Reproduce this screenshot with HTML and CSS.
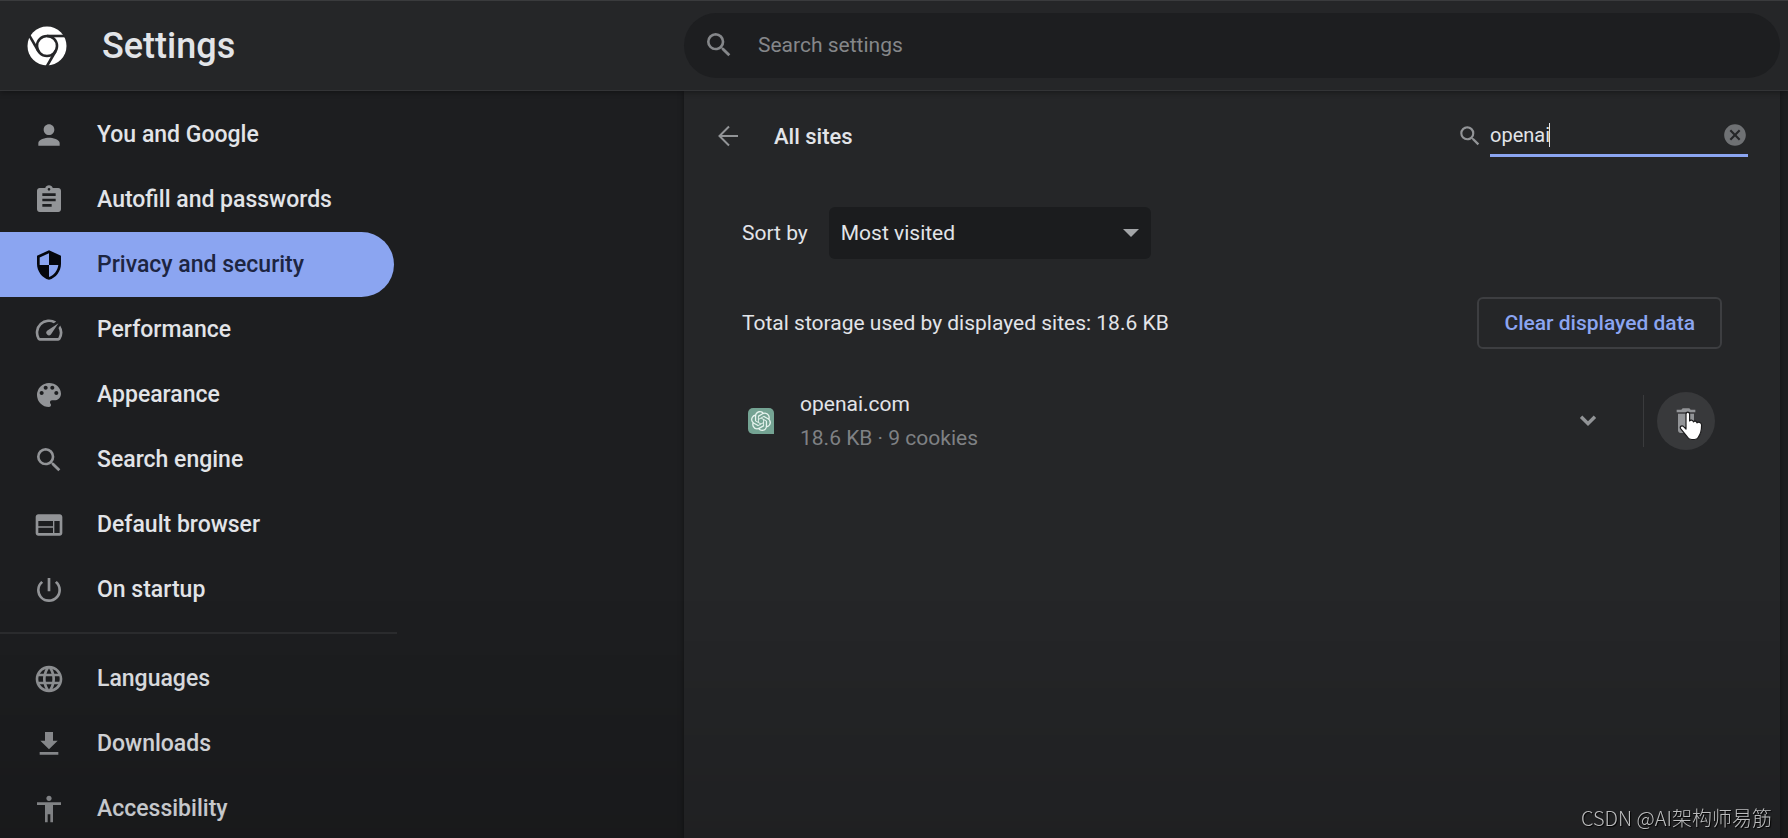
FILE: index.html
```html
<!DOCTYPE html>
<html lang="en">
<head>
<meta charset="utf-8">
<meta name="viewport" content="width=device-width, initial-scale=1">
<title>Settings - All sites</title>
<link rel="stylesheet" href="styles.css">
</head>
<body>
<header class="topbar">
  <div class="brand">
    <svg class="brand-logo" viewBox="0 0 40 40" aria-hidden="true">
      <circle cx="20" cy="20" r="19.5" fill="#fff"/>
      <g fill="none" stroke="#252628" stroke-width="2.6">
        <circle cx="20" cy="20" r="10"/>
        <path d="M20 10H39"/>
        <path d="M20 10H39" transform="rotate(120 20 20)"/>
        <path d="M20 10H39" transform="rotate(240 20 20)"/>
      </g>
    </svg>
    <h1 class="brand-title">Settings</h1>
  </div>
  <label class="search">
    <svg class="icon search-icon" viewBox="0 0 24 24" aria-hidden="true"><path d="M15.5 14h-.79l-.28-.27A6.471 6.471 0 0 0 16 9.5 6.5 6.5 0 1 0 9.5 16c1.61 0 3.09-.59 4.23-1.57l.27.28v.79l5 4.99L20.49 19l-4.99-5zm-6 0C7.01 14 5 11.99 5 9.5S7.01 5 9.5 5 14 7.01 14 9.5 11.99 14 9.5 14z"/></svg>
    <input class="search-input" type="text" placeholder="Search settings" aria-label="Search settings">
  </label>
</header>

<div class="layout">
  <nav class="sidebar" aria-label="Settings sections">
    <div class="nav-group">
      <a class="nav-item" href="#people"><svg class="icon" viewBox="0 0 24 24" aria-hidden="true"><path d="M12 12c2.21 0 4-1.79 4-4s-1.79-4-4-4-4 1.79-4 4 1.79 4 4 4zm0 2c-2.67 0-8 1.34-8 4v2h16v-2c0-2.66-5.33-4-8-4z"/></svg>You and Google</a>
      <a class="nav-item" href="#autofill"><svg class="icon" viewBox="0 0 24 24" aria-hidden="true"><path d="M19 3h-4.18C14.4 1.84 13.3 1 12 1c-1.300 0-2.400.84-2.820 2H5c-1.100 0-2 .9-2 2v14c0 1.100.9 2 2 2h14c1.100 0 2-.9 2-2V5c0-1.100-.9-2-2-2zm-7 0c.55 0 1 .45 1 1s-.45 1-1 1-1-.45-1-1 .45-1 1-1zm2 14H7v-2h7v2zm3-4H7v-2h10v2zm0-4H7V7h10v2z"/></svg>Autofill and passwords</a>
      <a class="nav-item nav-item-active" href="#privacy" aria-current="page"><svg class="icon" viewBox="0 0 24 24" aria-hidden="true"><path d="M12 1 3 5v6c0 5.550 3.840 10.740 9 12 5.160-1.260 9-6.450 9-12V5l-9-4zm0 10.990h7c-.53 4.120-3.280 7.790-7 8.940V12H5V6.300l7-3.110v8.800z"/></svg>Privacy and security</a>
      <a class="nav-item" href="#performance"><svg class="icon" viewBox="0 0 24 24" aria-hidden="true"><path d="M20.380 8.570l-1.230 1.850a8 8 0 0 1-.22 7.580H5.070A8 8 0 0 1 15.580 6.850l1.850-1.230A10 10 0 0 0 3.350 19a2 2 0 0 0 1.720 1h13.850a2 2 0 0 0 1.740-1 10 10 0 0 0-.27-10.440z"/><path d="M10.590 15.410a2 2 0 0 0 2.830 0l5.660-8.490-8.490 5.660a2 2 0 0 0 0 2.830z"/></svg>Performance</a>
      <a class="nav-item" href="#appearance"><svg class="icon" viewBox="0 0 24 24" aria-hidden="true"><path d="M12 3a9 9 0 0 0 0 18c.83 0 1.500-.67 1.500-1.500 0-.39-.15-.74-.39-1.010-.23-.26-.38-.61-.38-.99 0-.83.67-1.500 1.500-1.500H16c2.760 0 5-2.240 5-5 0-4.420-4.030-8-9-8zm-5.500 9c-.83 0-1.500-.67-1.500-1.500S5.670 9 6.500 9 8 9.670 8 10.500 7.330 12 6.500 12zm3-4C8.670 8 8 7.330 8 6.500S8.670 5 9.500 5s1.500.67 1.500 1.500S10.330 8 9.500 8zm5 0c-.83 0-1.500-.67-1.500-1.500S13.670 5 14.500 5s1.500.67 1.500 1.500S15.330 8 14.500 8zm3 4c-.83 0-1.500-.67-1.500-1.500S16.670 9 17.500 9s1.500.67 1.500 1.500-.67 1.500-1.500 1.500z"/></svg>Appearance</a>
      <a class="nav-item" href="#search"><svg class="icon" viewBox="0 0 24 24" aria-hidden="true"><path d="M15.5 14h-.79l-.28-.27A6.471 6.471 0 0 0 16 9.5 6.5 6.5 0 1 0 9.5 16c1.61 0 3.09-.59 4.23-1.57l.27.28v.79l5 4.99L20.49 19l-4.99-5zm-6 0C7.01 14 5 11.99 5 9.5S7.01 5 9.5 5 14 7.01 14 9.5 11.99 14 9.5 14z"/></svg>Search engine</a>
      <a class="nav-item" href="#browser"><svg class="icon" viewBox="0 0 24 24" aria-hidden="true"><path d="M20 4H4c-1.100 0-1.990.9-1.990 2L2 18c0 1.100.9 2 2 2h16c1.100 0 2-.9 2-2V6c0-1.100-.9-2-2-2zm-5 14H4v-4h11v4zm0-5H4V9h11v4zm5 5h-4V9h4v9z"/></svg>Default browser</a>
      <a class="nav-item" href="#startup"><svg class="icon" viewBox="0 0 24 24" aria-hidden="true"><path d="M13 3h-2v10h2V3zm4.830 2.170l-1.420 1.420A6.920 6.920 0 0 1 19 12c0 3.870-3.130 7-7 7A6.995 6.995 0 0 1 7.580 6.580L6.170 5.170A8.932 8.932 0 0 0 3 12a9 9 0 0 0 18 0c0-2.740-1.230-5.180-3.170-6.830z"/></svg>On startup</a>
    </div>
    <div class="nav-group">
      <a class="nav-item" href="#languages"><svg class="icon" viewBox="0 0 24 24" aria-hidden="true"><path d="M11.990 2C6.470 2 2 6.480 2 12s4.470 10 9.990 10C17.520 22 22 17.520 22 12S17.520 2 11.990 2zm6.930 6h-2.950a15.650 15.650 0 0 0-1.380-3.560A8.030 8.030 0 0 1 18.920 8zM12 4.040c.83 1.200 1.480 2.530 1.910 3.960h-3.820c.43-1.430 1.080-2.760 1.910-3.960zM4.260 14C4.100 13.360 4 12.690 4 12s.1-1.360.26-2h3.380c-.08.66-.14 1.320-.14 2s.06 1.340.14 2H4.260zm.82 2h2.950c.32 1.250.78 2.450 1.380 3.560A7.987 7.987 0 0 1 5.080 16zm2.950-8H5.080a7.987 7.987 0 0 1 4.330-3.560A15.650 15.650 0 0 0 8.030 8zM12 19.960c-.83-1.200-1.480-2.530-1.910-3.960h3.820c-.43 1.430-1.080 2.760-1.910 3.960zM14.340 14H9.660c-.09-.66-.16-1.320-.16-2s.07-1.350.16-2h4.680c.09.65.16 1.320.16 2s-.07 1.340-.16 2zm.25 5.560c.6-1.110 1.060-2.310 1.380-3.560h2.950a8.030 8.030 0 0 1-4.330 3.560zM16.360 14c.08-.66.14-1.320.14-2s-.06-1.340-.14-2h3.380c.16.640.26 1.310.26 2s-.1 1.360-.26 2h-3.380z"/></svg>Languages</a>
      <a class="nav-item" href="#downloads"><svg class="icon" viewBox="0 0 24 24" aria-hidden="true"><path d="M18.500 9.500H15V3H9v6.500H5.500L12 16zM5 18v2h14v-2z"/></svg>Downloads</a>
      <a class="nav-item" href="#accessibility"><svg class="icon" viewBox="0 0 24 24" aria-hidden="true"><path d="M12 2c1.100 0 2 .9 2 2s-.9 2-2 2-2-.9-2-2 .9-2 2-2zm9 7h-6v13h-2v-6h-2v6H9V9H3V7h18v2z"/></svg>Accessibility</a>
    </div>
  </nav>

  <main class="panel">
    <div class="panel-head">
      <button class="icon-button" type="button" aria-label="Back"><svg class="back-icon" viewBox="0 0 24 24" aria-hidden="true"><path d="M22 12H3.500M13 2.500 3.500 12l9.500 9.500"/></svg></button>
      <h2 class="panel-title">All sites</h2>
      <div class="filter">
        <svg class="icon filter-icon" viewBox="0 0 24 24" aria-hidden="true"><path d="M15.5 14h-.79l-.28-.27A6.471 6.471 0 0 0 16 9.5 6.5 6.5 0 1 0 9.5 16c1.61 0 3.09-.59 4.23-1.57l.27.28v.79l5 4.99L20.49 19l-4.99-5zm-6 0C7.01 14 5 11.99 5 9.5S7.01 5 9.5 5 14 7.01 14 9.5 11.99 14 9.5 14z"/></svg>
        <div class="filter-field">
          <input class="filter-input" type="text" value="openai" aria-label="Search sites">
          <span class="filter-caret"></span>
          <button class="icon-button" type="button" aria-label="Clear search"><svg class="icon filter-clear" viewBox="0 0 24 24" aria-hidden="true"><path d="M12 2C6.470 2 2 6.470 2 12s4.470 10 10 10 10-4.470 10-10S17.530 2 12 2zm5 13.590L15.590 17 12 13.410 8.410 17 7 15.590 10.590 12 7 8.410 8.410 7 12 10.590 15.590 7 17 8.410 13.410 12 17 15.590z"/></svg></button>
        </div>
      </div>
    </div>

    <div class="sort">
      <label for="sort-by">Sort by</label>
      <div class="select-box">
        <select class="select" id="sort-by"><option>Most visited</option><option>Data stored</option><option>Name</option></select>
        <svg class="select-arrow" viewBox="0 0 16 8" aria-hidden="true"><path d="M0 0h16L8 8z"/></svg>
      </div>
    </div>

    <div class="summary">
      <p class="summary-text">Total storage used by displayed sites: 18.6 KB</p>
      <button class="outline-button" type="button">Clear displayed data</button>
    </div>

    <div class="site">
      <svg class="site-icon" viewBox="0 0 26 26" aria-hidden="true">
        <path fill="#74a393" d="M5 0h16a5 5 0 0 1 5 5v21H5a5 5 0 0 1-5-5V5a5 5 0 0 1 5-5z"/>
        <path fill="#e6f3ee" transform="translate(3 3) scale(.833)" d="M22.2819 9.8211a5.9847 5.9847 0 0 0-.5157-4.9108 6.0462 6.0462 0 0 0-6.5098-2.9A6.0651 6.0651 0 0 0 4.9807 4.1818a5.9847 5.9847 0 0 0-3.9977 2.9 6.0462 6.0462 0 0 0 .7427 7.0966 5.98 5.98 0 0 0 .511 4.9107 6.051 6.051 0 0 0 6.5146 2.9001A5.9847 5.9847 0 0 0 13.2599 24a6.0557 6.0557 0 0 0 5.7718-4.2058 5.9894 5.9894 0 0 0 3.9977-2.9001 6.0557 6.0557 0 0 0-.7475-7.0729zm-9.022 12.6081a4.4755 4.4755 0 0 1-2.8764-1.0408l.1419-.0804 4.7783-2.7582a.7948.7948 0 0 0 .3927-.6813v-6.7369l2.02 1.1686a.071.071 0 0 1 .038.052v5.5826a4.504 4.504 0 0 1-4.4945 4.4944zm-9.6607-4.1254a4.4708 4.4708 0 0 1-.5346-3.0137l.142.0852 4.783 2.7582a.7712.7712 0 0 0 .7806 0l5.8428-3.3685v2.3324a.0804.0804 0 0 1-.0332.0615L9.74 19.9502a4.4992 4.4992 0 0 1-6.1408-1.6464zM2.3408 7.8956a4.485 4.485 0 0 1 2.3655-1.9728V11.6a.7664.7664 0 0 0 .3879.6765l5.8144 3.3543-2.0201 1.1685a.0757.0757 0 0 1-.071 0l-4.8303-2.7865A4.504 4.504 0 0 1 2.3408 7.872zm16.5963 3.8558L13.1038 8.364 15.1192 7.2a.0757.0757 0 0 1 .071 0l4.8303 2.7913a4.4944 4.4944 0 0 1-.6765 8.1042v-5.6772a.79.79 0 0 0-.407-.667zm2.0107-3.0231l-.142-.0852-4.7735-2.7818a.7759.7759 0 0 0-.7854 0L9.409 9.2297V6.8974a.0662.0662 0 0 1 .0284-.0615l4.8303-2.7866a4.4992 4.4992 0 0 1 6.6802 4.66zM8.3065 12.863l-2.02-1.1638a.0804.0804 0 0 1-.038-.0567V6.0742a4.4992 4.4992 0 0 1 7.3757-3.4537l-.142.0805L8.704 5.459a.7948.7948 0 0 0-.3927.6813zm1.0976-2.3654l2.602-1.4998 2.6069 1.4998v2.9994l-2.5974 1.4997-2.6067-1.4997Z"/>
      </svg>
      <div class="site-text">
        <div class="site-name">openai.com</div>
        <div class="site-detail">18.6 KB · 9 cookies</div>
      </div>
      <button class="icon-button" type="button" aria-label="Show details for openai.com"><svg class="icon chevron" viewBox="0 0 24 24" aria-hidden="true"><path d="M7.410 7.590 12 12.170l4.590-4.580L18.500 9.500 12 16 5.500 9.500z"/></svg></button>
      <div class="site-delete">
        <button class="icon-button delete-button" type="button" aria-label="Delete data for openai.com"><svg class="icon" viewBox="0 0 24 24" aria-hidden="true"><path d="M6 6.500V19c0 1.100.9 2 2 2h8c1.100 0 2-.9 2-2V6.500zM19 3.500h-3.500l-1-1h-5l-1 1H5v2h14z"/></svg></button>
        <svg class="pointer" viewBox="0 0 24 30" aria-hidden="true"><path fill="#fff" stroke="#1b1b1c" stroke-width="1.200" stroke-linejoin="round" d="M7 3.200C7 .3 10.600.3 10.600 3.200V10c.5-1.300 3.400-1.200 3.800.8.800-1.200 3.200-.8 3.600 1 .9-1 4.600-.8 4.600 2.200 0 7-1.200 9.400-3.200 12.200-.8 1.400-2 2.300-4 2.300h-2.600c-2 0-3.400-.9-4.300-2.300L1.600 17.600c-1.200-2.200 1.600-3.700 3-2L7 18z"/></svg>
      </div>
    </div>
  </main>
</div>
<div class="watermark">CSDN @AI架构师易筋</div>
</body>
</html>
```

FILE: styles.css
```css
* {
  box-sizing: border-box;
}

body {
  margin: 0;
  min-height: 100vh;
  display: flex;
  flex-direction: column;
  background: #1d1e20;
  color: #e2e4e8;
  font-family: Roboto, "Liberation Sans", sans-serif;
  font-size: 21px;
  overflow: hidden;
}

/* Soft shade along the bottom of the window */
body::after {
  content: "";
  position: fixed;
  inset: auto 0 0 0;
  height: 240px;
  background: linear-gradient(transparent, rgba(0, 0, 0, 0.14));
  pointer-events: none;
}

h1,
h2,
p {
  margin: 0;
}

input,
select,
button {
  margin: 0;
  padding: 0;
  border: 0;
  background: none;
  color: inherit;
  font: inherit;
  outline: none;
}

.icon {
  flex: none;
  width: 32px;
  height: 32px;
  fill: #929497;
}

.icon-button {
  flex: none;
  display: grid;
  place-items: center;
  border-radius: 50%;
}

.topbar {
  position: relative;
  z-index: 1;
  display: flex;
  align-items: center;
  height: 91px;
  padding-right: 8px;
  background: #252628;
  border-top: 1px solid #3a3b3d;
  border-bottom: 1px solid #333436;
  box-shadow: 0 1px 6px rgba(0, 0, 0, 0.4);
}

.brand {
  flex: none;
  width: 684px;
  display: flex;
  align-items: center;
  gap: 35px;
  padding-left: 27px;
}

.brand-logo {
  width: 40px;
  height: 40px;
}

.brand-title {
  font-size: 36px;
  font-weight: 500;
  line-height: 44px;
}

.search {
  flex: 1;
  display: flex;
  align-items: center;
  gap: 23px;
  height: 65px;
  padding: 0 19px 2px;
  border-radius: 33px;
  background: #1d1e20;
}

.search-icon {
  fill: #85878a;
}

.search-input {
  flex: 1;
}

.search-input::placeholder {
  color: #85878a;
  opacity: 1;
}

.layout {
  flex: 1;
  display: flex;
  padding-right: 8px;
}

.sidebar {
  flex: none;
  width: 684px;
  padding-top: 11px;
}

.nav-group + .nav-group {
  width: 397px;
  margin-top: 10px;
  padding-top: 12px;
  border-top: 2px solid #2b2c2e;
}

.nav-item {
  width: 394px;
  height: 65px;
  display: flex;
  align-items: center;
  gap: 32px;
  padding-left: 33px;
  border-radius: 0 33px 33px 0;
  color: inherit;
  font-size: 23px;
  font-weight: 500;
  text-decoration: none;
}

.nav-item-active {
  background: #8ba5f1;
  color: #1d2542;
}

.nav-item-active .icon {
  fill: #05070d;
}

.panel {
  flex: 1;
  min-width: 0;
  background: #252628;
  box-shadow: 0 0 6px rgba(0, 0, 0, 0.4);
}

.panel-head {
  display: flex;
  align-items: center;
  height: 90px;
  padding: 0 32px;
}

.back-icon {
  width: 24px;
  height: 24px;
  fill: none;
  stroke: #929497;
  stroke-width: 2;
}

.panel-title {
  flex: 1;
  margin-left: 34px;
  font-size: 22px;
  font-weight: 500;
}

.filter {
  display: flex;
  align-items: center;
  gap: 7px;
}

.filter-icon {
  width: 26px;
  height: 26px;
}

.filter-field {
  position: relative;
  display: flex;
  align-items: center;
  width: 258px;
  height: 42px;
  border-bottom: 3px solid #8ba5f1;
}

.filter-input {
  flex: 1;
  min-width: 0;
  font-size: 20px;
}

.filter-caret {
  position: absolute;
  left: 59px;
  top: 8px;
  width: 1px;
  height: 24px;
  background: #e2e4e8;
}

.filter-clear {
  width: 26px;
  height: 26px;
  fill: #6f7174;
}

.sort {
  display: flex;
  align-items: center;
  gap: 21px;
  margin-top: 26px;
  padding-left: 58px;
}

.select-box {
  position: relative;
  width: 322px;
}

.select {
  width: 100%;
  height: 52px;
  padding: 0 44px 0 12px;
  border-radius: 6px;
  background: #1b1c1e;
  appearance: none;
}

.select-arrow {
  position: absolute;
  right: 12px;
  top: 22px;
  width: 16px;
  height: 8px;
  fill: #a3a5a8;
  pointer-events: none;
}

.summary {
  display: flex;
  align-items: center;
  justify-content: space-between;
  margin-top: 38px;
  padding: 0 58px;
}

.outline-button {
  height: 52px;
  padding: 0 25px;
  border: 2px solid #3d3e41;
  border-radius: 6px;
  color: #8ba5f1;
  font-weight: 500;
}

.site {
  display: flex;
  align-items: center;
  margin-top: 38px;
  padding: 0 65px 0 64px;
}

.site-icon {
  flex: none;
  width: 26px;
  height: 26px;
}

.site-text {
  flex: 1;
  padding-left: 26px;
  line-height: 34px;
}

.site-detail {
  color: #7f8184;
}

.chevron {
  width: 30px;
  height: 30px;
}

.site-delete {
  position: relative;
  display: flex;
  align-items: center;
  height: 52px;
  margin-left: 40px;
  padding-left: 13px;
  border-left: 1px solid #3a3b3d;
}

.delete-button {
  width: 58px;
  height: 58px;
  background: #38393b;
}

.pointer {
  position: absolute;
  left: 35px;
  top: 16px;
  width: 24px;
  height: 30px;
}

.watermark {
  position: fixed;
  right: 16px;
  bottom: 5px;
  z-index: 2;
  color: #bcbdbe;
  font-family: "Noto Sans CJK SC", sans-serif;
  font-size: 20px;
  font-weight: 300;
  line-height: 30px;
  text-shadow: 1px 1px 1px #000;
}
```
